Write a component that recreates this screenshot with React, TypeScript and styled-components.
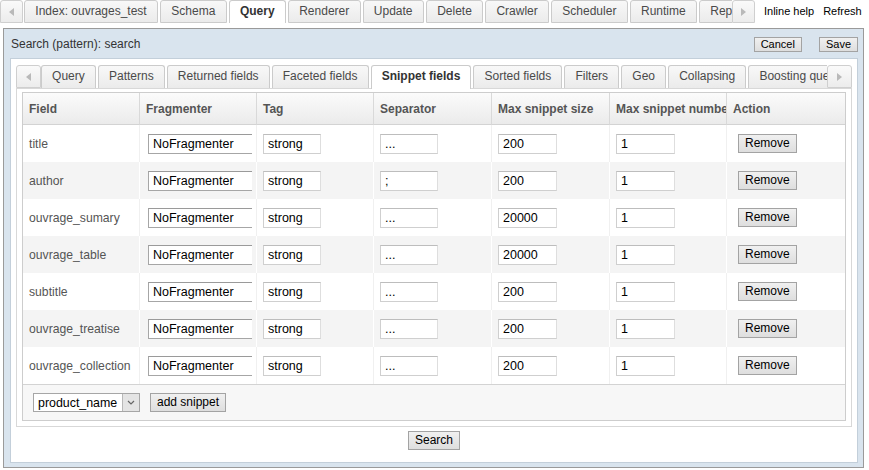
import React from 'react'
import styled, { createGlobalStyle } from 'styled-components'

const GlobalStyle = createGlobalStyle`
  html, body {
    margin: 0;
    padding: 0;
    background: #fff;
  }
  body {
    font-family: "Liberation Sans", Arial, sans-serif;
    font-size: 12px;
    color: #333;
  }
`

const topTabs = [
  'Index: ouvrages_test',
  'Schema',
  'Query',
  'Renderer',
  'Update',
  'Delete',
  'Crawler',
  'Scheduler',
  'Runtime',
  'Replication',
]

const innerTabs = [
  'Query',
  'Patterns',
  'Returned fields',
  'Faceted fields',
  'Snippet fields',
  'Sorted fields',
  'Filters',
  'Geo',
  'Collapsing',
  'Boosting queries',
]

const columns = [
  'Field',
  'Fragmenter',
  'Tag',
  'Separator',
  'Max snippet size',
  'Max snippet number',
  'Action',
]
const colWidths = [117, 117, 117, 118, 118, 117, 118]

const snippets = [
  { field: 'title', sep: '...', size: '200' },
  { field: 'author', sep: ';', size: '200' },
  { field: 'ouvrage_sumary', sep: '...', size: '20000' },
  { field: 'ouvrage_table', sep: '...', size: '20000' },
  { field: 'subtitle', sep: '...', size: '200' },
  { field: 'ouvrage_treatise', sep: '...', size: '200' },
  { field: 'ouvrage_collection', sep: '...', size: '200' },
]

const TopBar = styled.div`
  display: flex;
  align-items: flex-start;
  height: 23px;
`

const TabStrip = styled.div<{ $h: number }>`
  flex: none;
  display: flex;
  align-items: flex-start;
  height: ${(p) => p.$h}px;
`

const TabViewport = styled.div<{ $w: number; $start: number }>`
  flex: none;
  display: flex;
  align-items: flex-start;
  gap: 2px;
  width: ${(p) => p.$w}px;
  margin-left: ${(p) => p.$start}px;
  overflow: hidden;
`

const ArrowBox = styled.div<{ $w: number; $h: number }>`
  flex: none;
  box-sizing: border-box;
  width: ${(p) => p.$w}px;
  height: ${(p) => p.$h}px;
  border: 1px solid #cfcfcf;
  border-radius: 3px 3px 0 0;
  background: linear-gradient(#fafafa, #ececec);
  display: flex;
  align-items: center;
  justify-content: center;
`

const Tab = styled.div<{ $active?: boolean; $h: number; $panel?: boolean; $pad: number }>`
  flex: none;
  position: relative;
  box-sizing: border-box;
  height: ${(p) => (p.$active && p.$panel ? p.$h + 1 : p.$h)}px;
  line-height: ${(p) => p.$h - 2}px;
  padding: 0 ${(p) => p.$pad}px;
  border: 1px solid #cbcbcb;
  border-bottom: ${(p) => (p.$active || p.$panel ? 'none' : '1px solid #cbcbcb')};
  border-radius: 3px 3px 0 0;
  background: ${(p) => (p.$active ? '#fff' : 'linear-gradient(#f8f8f8, #ebebeb)')};
  color: ${(p) => (p.$active ? '#333' : '#4a4a4a')};
  font-weight: ${(p) => (p.$active ? 'bold' : 'normal')};
  white-space: nowrap;
  z-index: ${(p) => (p.$active ? 2 : 1)};
`

const Links = styled.div`
  flex: none;
  display: flex;
  gap: 9px;
  margin-left: 9px;
  height: 21px;
  align-items: center;
`

const Link = styled.a`
  font-size: 11px;
  color: #000;
  text-decoration: none;
  cursor: pointer;
  white-space: nowrap;
`

const Panel = styled.div`
  box-sizing: border-box;
  width: 861px;
  margin: 5px 0 0 3px;
  border: 1px solid #9a9a9a;
  background: #d9e4ee;
  padding: 0 5px 4px 6px;
`

const PanelHeader = styled.div`
  display: flex;
  align-items: center;
  justify-content: space-between;
  height: 29px;
  padding-left: 1px;
`

const Title = styled.div`
  font-size: 12px;
  color: #333;
`

const HeaderActions = styled.div`
  display: flex;
  gap: 17px;
  padding-top: 1px;
`

const Button = styled.button<{ $small?: boolean }>`
  box-sizing: border-box;
  height: ${(p) => (p.$small ? 15 : 19)}px;
  padding: 0 6px;
  border: 1px solid #a3a3a3;
  border-radius: 0;
  background: linear-gradient(#f0f0f0, #dedede);
  font-family: "Liberation Sans", Arial, sans-serif;
  font-size: ${(p) => (p.$small ? 11 : 12)}px;
  line-height: ${(p) => (p.$small ? 13 : 17)}px;
  color: #000;
  white-space: nowrap;
`

const WhiteBox = styled.div`
  border: 1px solid #c3cfda;
  background: #fff;
  padding: 6px 5px 0 5px;
`

const TabPanel = styled.div`
  border: 1px solid #d8d8d8;
  padding: 3px 5px 5px 5px;
`

const TableBox = styled.div`
  border: 1px solid #cdcdcd;
  background: #fff;
`

const Table = styled.table`
  width: 100%;
  table-layout: fixed;
  border-collapse: separate;
  border-spacing: 0;
`

const Th = styled.th`
  box-sizing: border-box;
  height: 32px;
  padding: 0 6px;
  text-align: left;
  font-size: 12px;
  font-weight: bold;
  color: #555;
  background: linear-gradient(#fbfbfb, #ebebeb);
  border-right: 1px solid #d9d9d9;
  border-bottom: 1px solid #d3d3d3;
  white-space: nowrap;
  overflow: hidden;
  &:last-child {
    border-right: none;
  }
`

const Row = styled.tr<{ $alt: boolean }>`
  & > td {
    background: ${(p) => (p.$alt ? '#f4f4f4' : '#fff')};
    border-right: 1px solid ${(p) => (p.$alt ? '#fff' : '#f0f0f0')};
  }
  & > td:last-child {
    border-right: none;
  }
`

const Td = styled.td`
  box-sizing: border-box;
  height: 37px;
  padding: 0 6px;
  font-size: 12.2px;
  color: #555;
  white-space: nowrap;
  overflow: hidden;
  vertical-align: middle;
`

const Input = styled.input<{ $w: number; $clip?: boolean; $ml?: number }>`
  box-sizing: border-box;
  display: block;
  width: ${(p) => p.$w}px;
  height: 20px;
  margin-left: ${(p) => p.$ml || 0}px;
  padding: 0 4px;
  border: 1px solid ${(p) => (p.$clip ? '#a6a6a6' : '#cfcfcf')};
  border-top-color: ${(p) => (p.$clip ? '#9a9a9a' : '#bdbdbd')};
  border-right: ${(p) => (p.$clip ? 'none' : '1px solid #dedede')};
  font-family: "Liberation Sans", Arial, sans-serif;
  font-size: 12.5px;
  color: #000;
  background: #fff;
  outline: none;
`

const RemoveButton = styled(Button)`
  margin-left: 5px;
`

const TableFooter = styled.div`
  display: flex;
  align-items: center;
  gap: 10px;
  height: 35px;
  padding-left: 10px;
  border-top: 1px solid #d3d3d3;
  background: #f7f7f7;
`

const SelectWrap = styled.div`
  display: flex;
  box-sizing: border-box;
  width: 107px;
  height: 19px;
  border: 1px solid #a6a6a6;
  background: #fff;
`

const Select = styled.select`
  flex: 1;
  min-width: 0;
  appearance: none;
  border: none;
  background: transparent;
  padding: 0 0 0 4px;
  font-family: "Liberation Sans", Arial, sans-serif;
  font-size: 12.4px;
  color: #000;
  outline: none;
`

const SelectArrow = styled.span`
  flex: none;
  width: 16px;
  border-left: 1px solid #b8b8b8;
  background: #e4e4e4;
  display: flex;
  align-items: center;
  justify-content: center;
`

const SearchRow = styled.div`
  display: flex;
  justify-content: center;
  padding: 4px 0 12px;
`

const Triangle = ({ dir }: { dir: 'left' | 'right' }) => (
  <svg width="5" height="8" viewBox="0 0 5 8">
    <polygon points={dir === 'left' ? '5,0 5,8 0,4' : '0,0 0,8 5,4'} fill="#b9b9b9" />
  </svg>
)

export default function App() {
  return (
    <>
      <GlobalStyle />
      <TopBar>
        <TabStrip $h={23}>
          <ArrowBox $w={23} $h={23}>
            <Triangle dir="left" />
          </ArrowBox>
          <TabViewport $w={708} $start={1}>
            {topTabs.map((t) => (
              <Tab key={t} $h={23} $pad={10.3} $active={t === 'Query'}>
                {t}
              </Tab>
            ))}
          </TabViewport>
          <ArrowBox $w={23} $h={23}>
            <Triangle dir="right" />
          </ArrowBox>
        </TabStrip>
        <Links>
          <Link>Inline help</Link>
          <Link>Refresh</Link>
        </Links>
      </TopBar>

      <Panel>
        <PanelHeader>
          <Title>Search (pattern): search</Title>
          <HeaderActions>
            <Button $small>Cancel</Button>
            <Button $small>Save</Button>
          </HeaderActions>
        </PanelHeader>

        <WhiteBox>
          <TabStrip $h={23}>
            <ArrowBox $w={25} $h={23}>
              <Triangle dir="left" />
            </ArrowBox>
            <TabViewport $w={786} $start={0}>
              {innerTabs.map((t) => (
                <Tab key={t} $h={23} $pad={10.1} $panel $active={t === 'Snippet fields'}>
                  {t}
                </Tab>
              ))}
            </TabViewport>
            <ArrowBox $w={25} $h={23}>
              <Triangle dir="right" />
            </ArrowBox>
          </TabStrip>

          <TabPanel>
            <TableBox>
              <Table>
                <colgroup>
                  {colWidths.map((w, i) => (
                    <col key={i} style={{ width: w }} />
                  ))}
                </colgroup>
                <thead>
                  <tr>
                    {columns.map((c) => (
                      <Th key={c}>{c}</Th>
                    ))}
                  </tr>
                </thead>
                <tbody>
                  {snippets.map((s, i) => (
                    <Row key={s.field} $alt={i % 2 === 1}>
                      <Td>{s.field}</Td>
                      <Td>
                        <Input $w={104} $clip $ml={2} defaultValue="NoFragmenter" />
                      </Td>
                      <Td>
                        <Input $w={58} defaultValue="strong" />
                      </Td>
                      <Td>
                        <Input $w={58} defaultValue={s.sep} />
                      </Td>
                      <Td>
                        <Input $w={59} defaultValue={s.size} />
                      </Td>
                      <Td>
                        <Input $w={59} defaultValue="1" />
                      </Td>
                      <Td>
                        <RemoveButton>Remove</RemoveButton>
                      </Td>
                    </Row>
                  ))}
                </tbody>
              </Table>
              <TableFooter>
                <SelectWrap>
                  <Select defaultValue="product_name">
                    <option value="product_name">product_name</option>
                  </Select>
                  <SelectArrow>
                    <svg width="8" height="5" viewBox="0 0 8 5">
                      <polyline points="1,1 4,4 7,1" fill="none" stroke="#666" strokeWidth="1.2" />
                    </svg>
                  </SelectArrow>
                </SelectWrap>
                <Button>add snippet</Button>
              </TableFooter>
            </TableBox>
          </TabPanel>

          <SearchRow>
            <Button>Search</Button>
          </SearchRow>
        </WhiteBox>
      </Panel>
    </>
  )
}
